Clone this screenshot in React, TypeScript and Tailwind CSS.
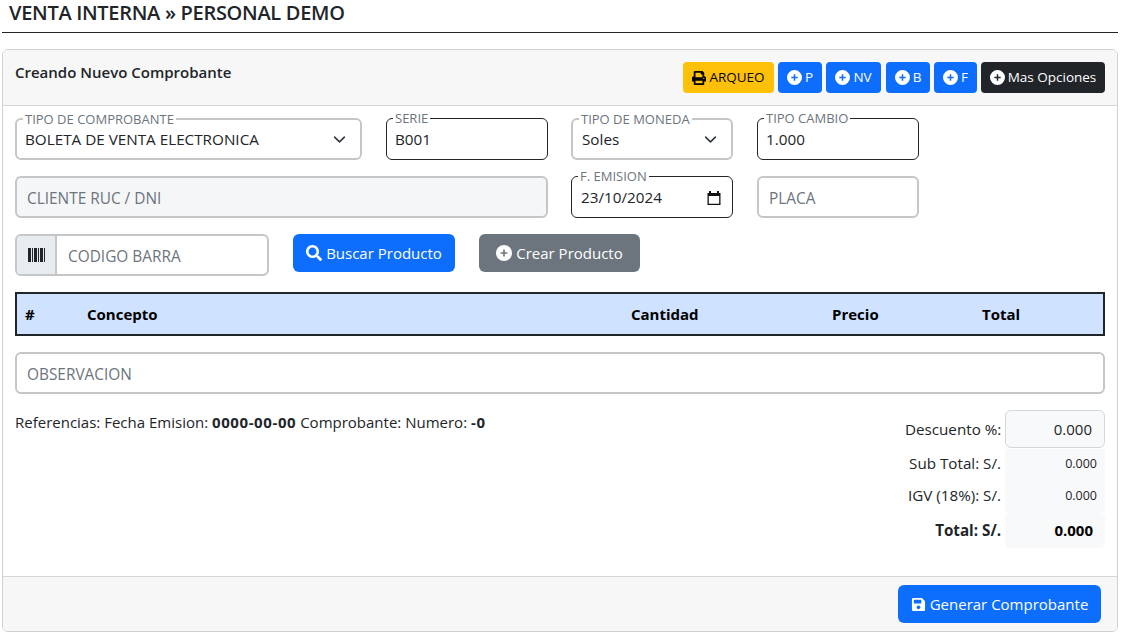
import { FaPrint, FaSave, FaSearch } from "react-icons/fa";

const FONT = "font-['Open_Sans','Liberation_Sans',sans-serif]";

function PlusDot({ size = 15 }: { size?: number }) {
  return (
    <svg viewBox="0 0 16 16" width={size} height={size} className="shrink-0" fill="currentColor">
      <path
        fillRule="evenodd"
        d="M8 0a8 8 0 1 1 0 16A8 8 0 0 1 8 0Zm-.8 4.600v2.600H4.600v1.600h2.600v2.600h1.600V8.800h2.600V7.200H8.800V4.600H7.200Z"
      />
    </svg>
  );
}

function Barcode() {
  return (
    <svg viewBox="0 0 17 14" width={17} height={14} className="shrink-0" fill="#212529" shapeRendering="crispEdges">
      <rect x="0" y="0" width="3" height="14" />
      <rect x="4" y="0" width="1" height="14" />
      <rect x="6" y="0" width="3" height="14" />
      <rect x="10" y="0" width="1" height="14" />
      <rect x="12" y="0" width="3" height="14" />
      <rect x="16" y="0" width="1" height="14" />
    </svg>
  );
}

function Chevron() {
  return (
    <svg viewBox="0 0 16 16" className="h-[13px] w-[13px] shrink-0" fill="none" stroke="#343a40" strokeWidth="2" strokeLinecap="round" strokeLinejoin="round">
      <path d="m2 5 6 6 6-6" />
    </svg>
  );
}

function Calendar() {
  return (
    <svg viewBox="0 0 16 16" className="h-4 w-4 shrink-0" fill="#111">
      <path d="M3 1h2v2h6V1h2v2h1.500v12h-13V3H3V1Zm-.2 5v7.700h10.400V6H2.800Z" />
    </svg>
  );
}

function Floating({ label, value, width, dark, select, date, pad = "pl-[8px]" }: { label: string; value: string; width: string; dark?: boolean; select?: boolean; date?: boolean; pad?: string }) {
  return (
    <div className={`relative flex h-[42px] items-center justify-between rounded-md ${pad} ${date ? "pr-[10px]" : "pr-[14px]"} ${width} ${dark ? "border border-[#212529] pt-[1px]" : "border-2 border-[#c4c6c8]"}`}>
      <span className="absolute -top-[8px] left-[6px] bg-white px-[2px] text-[13px] leading-[15px] text-[#6c757d] whitespace-nowrap">{label}</span>
      <span className="text-[15.25px] text-[#212529]">{value}</span>
      {select && <Chevron />}
      {date && <Calendar />}
    </div>
  );
}

function Plain({ placeholder, width, disabled }: { placeholder: string; width: string; disabled?: boolean }) {
  return (
    <input
      readOnly
      placeholder={placeholder}
      className={`h-[42px] rounded-md border-2 border-[#c4c6c8] px-[10px] pt-[2px] text-[15.4px] outline-none placeholder:text-[#6c757d] ${width} ${disabled ? "bg-[#f5f6f7]" : "bg-white"}`}
    />
  );
}

function HeadBtn({ children, className }: { children: React.ReactNode; className: string }) {
  return (
    <button className={`flex h-[31px] items-center justify-center gap-[3px] rounded-[4px] text-[13.5px] ${className}`}>
      {children}
    </button>
  );
}

function TotalRow({ label, value, bold, className, big }: { label: string; value: string; bold?: boolean; className: string; big?: boolean }) {
  return (
    <div className="flex items-center gap-1">
      <span className={`flex-1 whitespace-nowrap text-right text-[15.2px] text-[#212529] ${big || bold ? "" : "pb-[2px]"} ${bold ? "font-bold" : ""}`}>{label}</span>
      <span className={`flex w-[100px] items-center justify-end bg-[#f8f9fa] ${className} ${big ? "" : "text-[12.5px]"} ${bold ? "text-[15px] font-bold text-black" : "text-[#212529]"}`}>{value}</span>
    </div>
  );
}

export default function App() {
  return (
    <div className={`${FONT} h-[639px] w-[1126px] overflow-hidden bg-white text-[#212529]`}>
      <div className="pl-[9px] text-[20px] font-semibold leading-[25px] tracking-[-0.3px]">VENTA INTERNA » PERSONAL DEMO</div>
      <div className="ml-[2px] mt-[7px] w-[1116px] border-t border-[#212529]" />

      <div className="ml-[2px] mt-[16px] flex h-[583px] w-[1116px] flex-col overflow-hidden rounded-md border border-[#cfd0d1]">
        <div className="flex h-[56px] shrink-0 items-start justify-between border-b border-[#d5d6d7] bg-[#f7f7f7] pl-3 pr-3">
          <span className="pt-[11px] text-[15px] font-semibold leading-[22px]">Creando Nuevo Comprobante</span>
          <div className="flex gap-1 pt-[12px]">
            <HeadBtn className="w-[91px] bg-[#ffc107] text-black"><FaPrint className="h-[14px] w-[14px]" />ARQUEO</HeadBtn>
            <HeadBtn className="w-[44px] bg-[#0d6efd] text-white"><PlusDot />P</HeadBtn>
            <HeadBtn className="w-[55px] bg-[#0d6efd] text-white"><PlusDot />NV</HeadBtn>
            <HeadBtn className="ml-px w-[44px] bg-[#0d6efd] text-white"><PlusDot />B</HeadBtn>
            <HeadBtn className="w-[43px] bg-[#0d6efd] text-white"><PlusDot />F</HeadBtn>
            <HeadBtn className="w-[124px] bg-[#212529] text-white"><PlusDot />Mas Opciones</HeadBtn>
          </div>
        </div>

        <div className="flex flex-1 flex-col pl-3 pr-3 pt-3">
          <div className="flex">
            <Floating label="TIPO DE COMPROBANTE" value="BOLETA DE VENTA ELECTRONICA" width="w-[347px]" select />
            <Floating label="SERIE" value="B001" width="ml-[24px] w-[162px]" dark />
            <Floating label="TIPO DE MONEDA" value="Soles" width="ml-[23px] w-[162px]" select pad="pl-[9px]" />
            <Floating label="TIPO CAMBIO" value="1.000" width="ml-[24px] w-[162px]" dark />
          </div>

          <div className="mt-[16px] flex">
            <Plain placeholder="CLIENTE RUC / DNI" width="w-[533px]" disabled />
            <Floating label="F. EMISION" value="23/10/2024" width="ml-[23px] w-[162px]" dark date pad="pl-[9px]" />
            <Plain placeholder="PLACA" width="ml-[24px] w-[162px]" />
          </div>

          <div className="mt-[16px] flex items-start">
            <div className="flex h-[42px] w-[254px] overflow-hidden rounded-md border-2 border-[#c4c6c8]">
              <span className="flex w-[40px] items-center justify-center border-r-2 border-[#c4c6c8] bg-[#e9ecef]"><Barcode /></span>
              <input readOnly placeholder="CODIGO BARRA" className="min-w-0 flex-1 pl-[11px] pr-[10px] pt-[3px] text-[15.4px] outline-none placeholder:text-[#6c757d]" />
            </div>
            <button className="ml-[24px] flex h-[38px] w-[162px] items-center justify-center gap-[4px] rounded-md bg-[#0d6efd] text-[15px] text-white"><FaSearch className="h-[16px] w-[16px]" />Buscar Producto</button>
            <button className="ml-[24px] flex h-[38px] w-[161px] items-center justify-center gap-[4px] rounded-md bg-[#6c757d] text-[15px] text-white"><PlusDot size={16} />Crear Producto</button>
          </div>

          <div className="mt-[16px] flex h-[44px] w-[1090px] items-center border-2 border-[#212529] bg-[#cfe2ff] pt-[1px] text-[15px] font-bold text-black">
            <span className="w-[70px] pl-2">#</span>
            <span className="w-[544px]">Concepto</span>
            <span className="w-[201px]">Cantidad</span>
            <span className="w-[150px]">Precio</span>
            <span>Total</span>
          </div>

          <Plain placeholder="OBSERVACION" width="mt-[16px] w-[1090px] shrink-0" />

          <div className="mt-[16px] flex w-[1090px] items-start justify-between">
            <p className="pt-[1px] text-[15px] leading-[22px]">
              Referencias: Fecha Emision: <b className="tracking-[0.6px]">0000-00-00</b> Comprobante: Numero: <b className="tracking-[0.6px]">-0</b>
            </p>
            <div className="flex w-[200px] flex-col">
              <TotalRow label="Descuento %:" value="0.000" big className="h-[38px] rounded-md border border-[#d4d6d8] pr-3 text-[15px]" />
              <div className="h-px" />
              <TotalRow label="Sub Total: S/." value="0.000" className="h-[31px] pr-2" />
              <TotalRow label="IGV (18%): S/." value="0.000" className="h-[32px] pr-2" />
              <TotalRow label="Total: S/." value="0.000" bold className="h-[36px] rounded-md pr-3" />
            </div>
          </div>
        </div>

        <div className="flex h-[55px] shrink-0 items-start justify-end border-t border-[#d5d6d7] bg-[#f7f7f7] pr-4 pt-2">
          <button className="flex h-[38px] w-[203px] items-center justify-center gap-[4px] rounded-md bg-[#0d6efd] text-[15px] text-white"><FaSave className="h-[15px] w-[15px]" />Generar Comprobante</button>
        </div>
      </div>
    </div>
  );
}
